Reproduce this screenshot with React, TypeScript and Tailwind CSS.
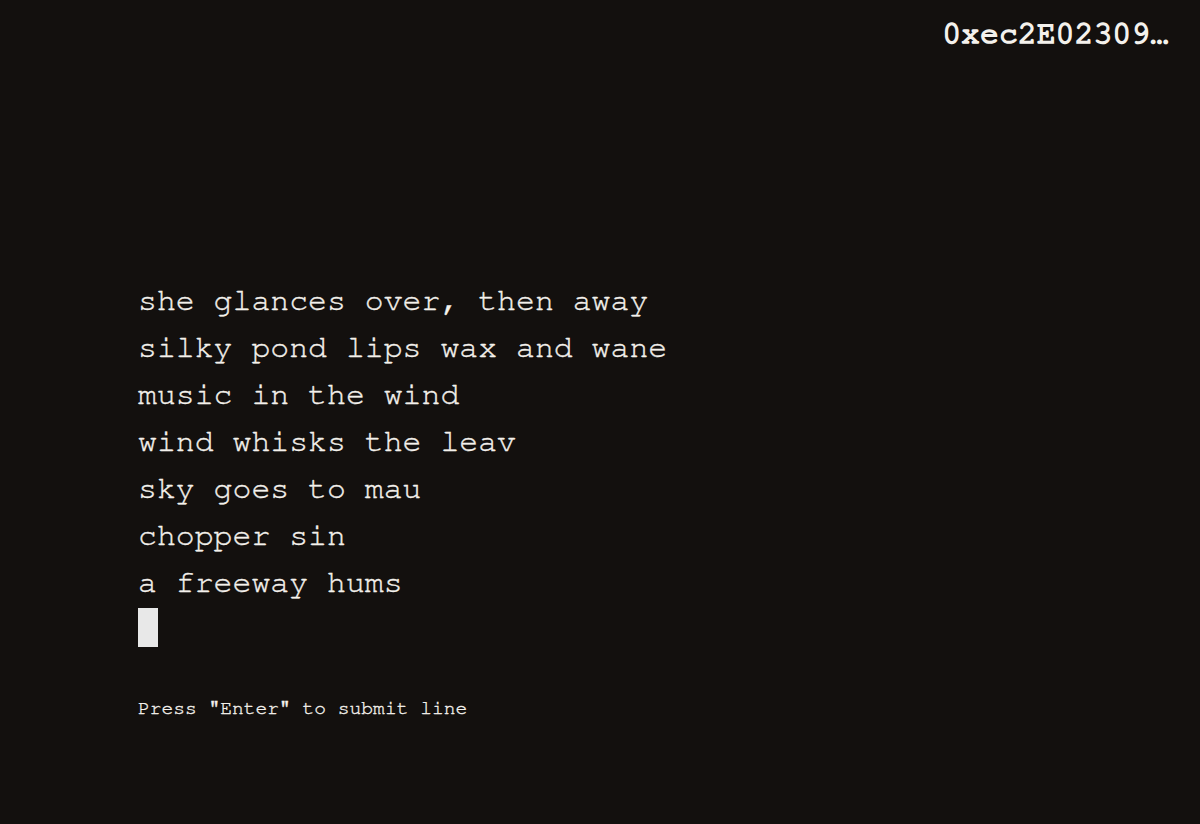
import React from "react";

const lines = [
  "she glances over, then away",
  "silky pond lips wax and wane",
  "music in the wind",
  "wind whisks the leav",
  "sky goes to mau",
  "chopper sin",
  "a freeway hums",
];

export default function App() {
  return (
    <div
      className="w-[1200px] h-[824px] bg-[#13100e] text-[#f4f1ec] overflow-hidden"
      style={{
        fontFamily:
          '"Nimbus Mono PS", "Nimbus Mono L", FreeMono, Courier, "Courier New", "Liberation Mono", monospace',
      }}
    >
      <div className="flex justify-end pt-[16px] pr-[31px]">
        <span className="text-[31.5px] font-normal leading-[36px] [-webkit-text-stroke:1.7px_#f4f1ec]">0xec2E02309…</span>
      </div>
      <div className="flex flex-col pl-[138px] pt-[225px] [-webkit-text-stroke:0.35px_#f4f1ec]">
        {lines.map((l) => (
          <div key={l} className="text-[31.5px] leading-[47px] whitespace-pre">
            {l}
          </div>
        ))}
        <div className="h-[47px] flex items-start">
          <div className="mt-[2px] w-[20px] h-[39px] bg-[#e8e8e8]" />
        </div>
        <div className="mt-[43px] text-[19.6px] leading-[24px]">Press "Enter" to submit line</div>
      </div>
    </div>
  );
}
